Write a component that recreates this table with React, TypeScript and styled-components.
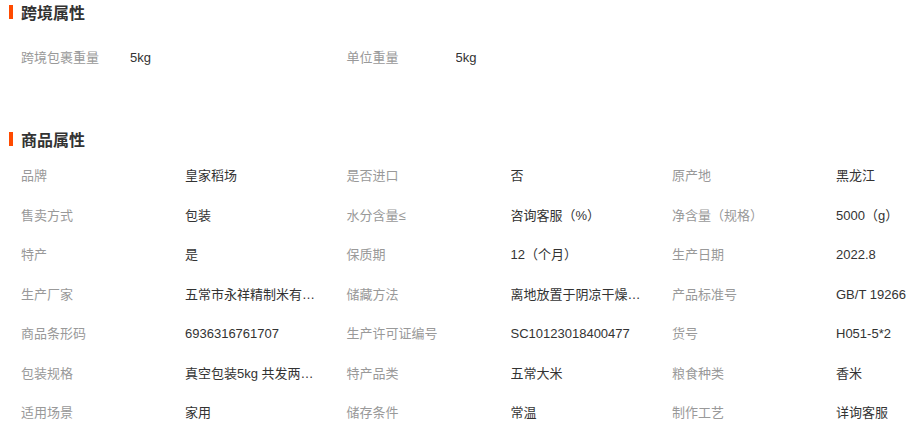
import React from "react";
import styled, { createGlobalStyle } from "styled-components";

const GlobalStyle = createGlobalStyle`
  html, body {
    margin: 0;
    padding: 0;
    background: #ffffff;
  }
  body {
    font-family: "Liberation Sans", "Noto Sans CJK SC", sans-serif;
    font-size: 13px;
  }
`;

const Page = styled.div`
  display: flex;
  flex-direction: column;
  width: 924px;
  overflow: hidden;
`;

const Section = styled.section<{ $mt: number }>`
  display: flex;
  flex-direction: column;
  margin-top: ${(p) => p.$mt}px;
`;

const Title = styled.h3`
  display: flex;
  align-items: center;
  gap: 8px;
  height: 24px;
  margin: 0;
  padding-left: 9px;
  font-family: "Liberation Sans", "Noto Sans CJK SC", sans-serif;
  font-size: 16px;
  font-weight: 700;
  color: #333333;
  &::before {
    content: "";
    display: block;
    width: 4px;
    height: 14px;
    background: #ff4a00;
  }
`;

const Grid = styled.div<{ $mt: number }>`
  display: grid;
  grid-template-columns: 325.5px 325.5px minmax(0, 1fr);
  padding-left: 21px;
  margin-top: ${(p) => p.$mt}px;
`;

const Pair = styled.div<{ $labelW: number }>`
  display: grid;
  grid-template-columns: ${(p) => p.$labelW}px minmax(0, 135px);
  align-items: center;
  height: 39.5px;
`;

const Label = styled.span`
  color: #999999;
  font-size: 13px;
  line-height: 16px;
  white-space: nowrap;
`;

const Value = styled.span`
  color: #333333;
  font-size: 13px;
  line-height: 16px;
  white-space: nowrap;
  overflow: hidden;
  text-overflow: ellipsis;
`;

type Item = [string, string];

const crossBorder: Item[] = [
  ["跨境包裹重量", "5kg"],
  ["单位重量", "5kg"],
];

const product: Item[] = [
  ["品牌", "皇家稻场"],
  ["是否进口", "否"],
  ["原产地", "黑龙江"],
  ["售卖方式", "包装"],
  ["水分含量≤", "咨询客服（%）"],
  ["净含量（规格）", "5000（g）"],
  ["特产", "是"],
  ["保质期", "12（个月）"],
  ["生产日期", "2022.8"],
  ["生产厂家", "五常市永祥精制米有限公司"],
  ["储藏方法", "离地放置于阴凉干燥通风处"],
  ["产品标准号", "GB/T 19266"],
  ["商品条形码", "6936316761707"],
  ["生产许可证编号", "SC10123018400477"],
  ["货号", "H051-5*2"],
  ["包装规格", "真空包装5kg 共发两袋装"],
  ["特产品类", "五常大米"],
  ["粮食种类", "香米"],
  ["适用场景", "家用"],
  ["储存条件", "常温"],
  ["制作工艺", "详询客服"],
];

function PropGroup({
  title,
  items,
  labelW,
  mt,
  gridMt,
}: {
  title: string;
  items: Item[];
  labelW: number;
  mt: number;
  gridMt: number;
}) {
  return (
    <Section $mt={mt}>
      <Title>{title}</Title>
      <Grid $mt={gridMt}>
        {items.map(([k, v]) => (
          <Pair key={k} $labelW={labelW}>
            <Label>{k}</Label>
            <Value title={v}>{v}</Value>
          </Pair>
        ))}
      </Grid>
    </Section>
  );
}

export default function App() {
  return (
    <>
      <GlobalStyle />
      <Page>
        <PropGroup title="跨境属性" items={crossBorder} labelW={109} mt={0} gridMt={14} />
        <PropGroup title="商品属性" items={product} labelW={164} mt={49} gridMt={6} />
      </Page>
    </>
  );
}
